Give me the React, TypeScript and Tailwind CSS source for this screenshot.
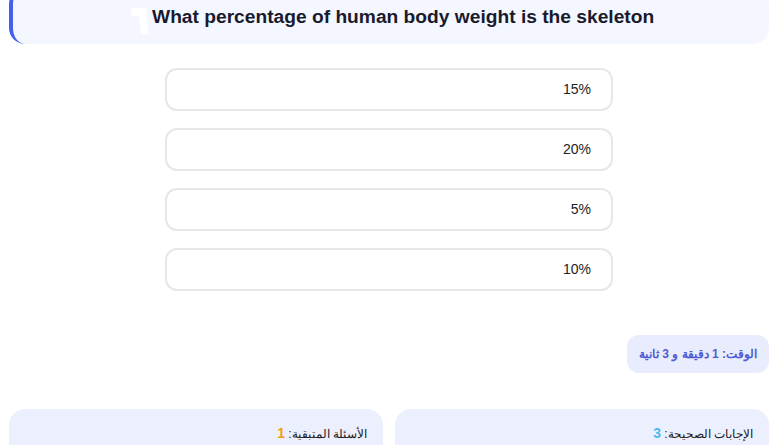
import React from "react";

const options = ["15%", "20%", "5%", "10%"];

const App = () => {
  return (
    <div
      dir="rtl"
      className="min-h-[445px] overflow-hidden bg-white px-2 pl-[9px]"
      style={{ fontFamily: '"Liberation Sans", Arial, "Noto Sans", sans-serif' }}
    >
      {/* Question header */}
      <div className="-mt-[12px] flex items-center justify-center rounded-2xl border-l-4 border-[#4361ee] bg-[#f4f7ff] pb-[15px] pt-[17px]">
        <h1 dir="ltr" className="flex h-6 items-center text-[19.2px] font-bold leading-6 text-[#1a1a2e]">
          <span
            className="mr-[1px] mt-[6px] inline-block scale-x-75 text-[38px] font-bold leading-6 text-white [-webkit-text-stroke:3px_white]"
            style={{ fontFamily: '"DejaVu Sans", sans-serif' }}
          >
            ٦
          </span>
          What percentage of human body weight is the skeleton
        </h1>
      </div>

      {/* Options */}
      <div className="mx-auto mt-[24px] flex w-[448px] flex-col gap-[17px]">
        {options.map((opt) => (
          <button
            key={opt}
            type="button"
            className="flex h-[43px] items-center rounded-xl border-2 border-[#e5e7eb] bg-white pr-[20px] text-right text-[14px] text-[#222]"
          >
            {opt}
          </button>
        ))}
      </div>

      {/* Timer */}
      <div className="mt-[44px] flex">
        <div className="flex h-[38px] w-[142px] items-center justify-center rounded-xl bg-[#e8ecfd] text-[12px] font-bold text-[#4f5bd5]">
          الوقت: 1 دقيقة و 3 ثانية
        </div>
      </div>

      {/* Stats */}
      <div className="mt-[36px] grid grid-cols-2 gap-[12px]">
        <div className="h-[60px] rounded-2xl bg-[#eceffd] px-[16px] pt-[14px] text-[12px] text-[#222]">
          الإجابات الصحيحة: <span className="text-[14px] font-bold text-[#4fb8f0]">3</span>
        </div>
        <div className="h-[60px] rounded-2xl bg-[#eceffd] px-[16px] pt-[14px] text-[12px] text-[#222]">
          الأسئلة المتبقية: <span className="text-[14px] font-bold text-[#f59e0b]">1</span>
        </div>
      </div>
    </div>
  );
};

export default App;
